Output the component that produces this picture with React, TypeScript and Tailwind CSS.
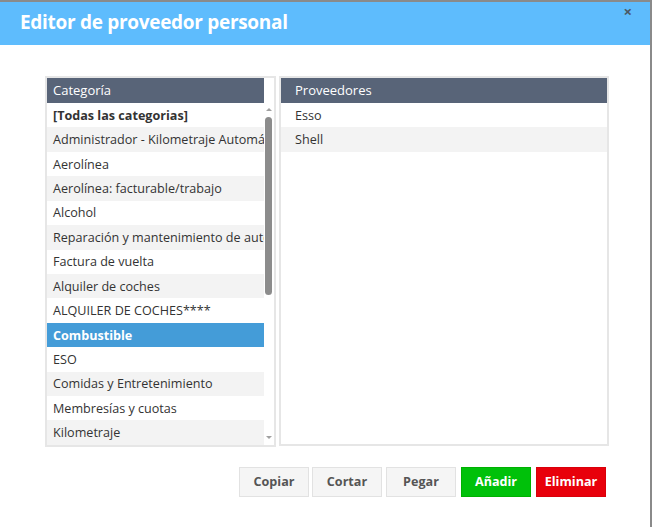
import React from "react";

const categories = [
  "[Todas las categorias]",
  "Administrador - Kilometraje Automático",
  "Aerolínea",
  "Aerolínea: facturable/trabajo",
  "Alcohol",
  "Reparación y mantenimiento de automóviles",
  "Factura de vuelta",
  "Alquiler de coches",
  "ALQUILER DE COCHES****",
  "Combustible",
  "ESO",
  "Comidas y Entretenimiento",
  "Membresías y cuotas",
  "Kilometraje",
];

const vendors = ["Esso", "Shell"];

function Row({ text, index, selected, bold }: { text: string; index: number; selected?: boolean; bold?: boolean }) {
  const base = "h-[24.43px] flex items-center pt-[2px] px-[6px] whitespace-nowrap overflow-hidden text-[12.6px]";
  let cls = index % 2 === 1 ? "bg-[#f3f3f3] text-[#333]" : "bg-white text-[#333]";
  if (selected) cls = "bg-[#449cd8] text-white font-bold";
  return <div className={`${base} ${cls} ${bold ? "font-bold" : ""}`}>{text}</div>;
}

export default function App() {
  return (
    <div className="w-[652px] h-[527px] bg-[#8a8a8a] overflow-hidden" style={{ fontFamily: '"Open Sans", "Noto Sans", sans-serif' }}>
      <div className="w-[650px] h-[525px] mt-[2px] bg-white flex flex-col">
        <div className="relative h-[43px] bg-[#5ebcfd] flex items-center pl-[20px] pb-[2px]">
          <span className="text-white text-[19px] font-bold tracking-[-0.3px]">Editor de proveedor personal</span>
          <span className="absolute right-[18px] top-[2px] text-[#4b5866] text-[15px] font-bold leading-none">×</span>
        </div>
        <div className="flex pl-[45px] pt-[31px] gap-[3px]">
          <div className="w-[231px] h-[371px] border-2 border-[#e6e6e6] flex">
            <div className="flex-1 min-w-0 flex flex-col">
              <div className="h-[25px] bg-[#586478] text-white text-[13px] flex items-center pt-[1px] px-[6px]">Categoría</div>
              {categories.map((c, i) => (
                <Row key={c} text={c} index={i} selected={c === "Combustible"} bold={i === 0} />
              ))}
            </div>
            <div className="w-[10px] relative bg-white">
              <div className="absolute left-[2px] top-[30px] w-0 h-0 border-l-[3px] border-r-[3px] border-b-[3px] border-l-transparent border-r-transparent border-b-[#a0a0a0]" />
              <div className="absolute left-[1px] top-[39px] w-[7px] h-[178px] rounded-full bg-[#8c8c8c]" />
              <div className="absolute left-[2px] top-[358px] w-0 h-0 border-l-[3px] border-r-[3px] border-t-[3px] border-l-transparent border-r-transparent border-t-[#a0a0a0]" />
            </div>
          </div>
          <div className="w-[330px] h-[370px] border-2 border-[#e6e6e6] flex flex-col">
            <div className="h-[25px] bg-[#586478] text-white text-[13px] flex items-center pt-[1px] px-[14px]">Proveedores</div>
            {vendors.map((v, i) => (
              <div key={v} className={`h-[24.43px] flex items-center pt-[2px] px-[14px] text-[12.6px] text-[#333] ${i % 2 === 1 ? "bg-[#f3f3f3]" : "bg-white"}`}>{v}</div>
            ))}
          </div>
        </div>
        <div className="flex justify-end pr-[44px] pt-[20px] text-[12.6px] font-bold">
          <button className="w-[70px] h-[30px] bg-[#f5f5f5] border border-[#e2e2e2] text-[#555]">Copiar</button>
          <button className="w-[70px] h-[30px] ml-[3px] bg-[#f5f5f5] border border-[#e2e2e2] text-[#555]">Cortar</button>
          <button className="w-[70px] h-[30px] ml-[4px] bg-[#f5f5f5] border border-[#e2e2e2] text-[#555]">Pegar</button>
          <button className="w-[70px] h-[30px] ml-[5px] bg-[#00c10a] border border-[#00b000] text-white">Añadir</button>
          <button className="w-[70px] h-[30px] ml-[5px] bg-[#e8000b] border border-[#d8000a] text-white">Eliminar</button>
        </div>
      </div>
    </div>
  );
}
